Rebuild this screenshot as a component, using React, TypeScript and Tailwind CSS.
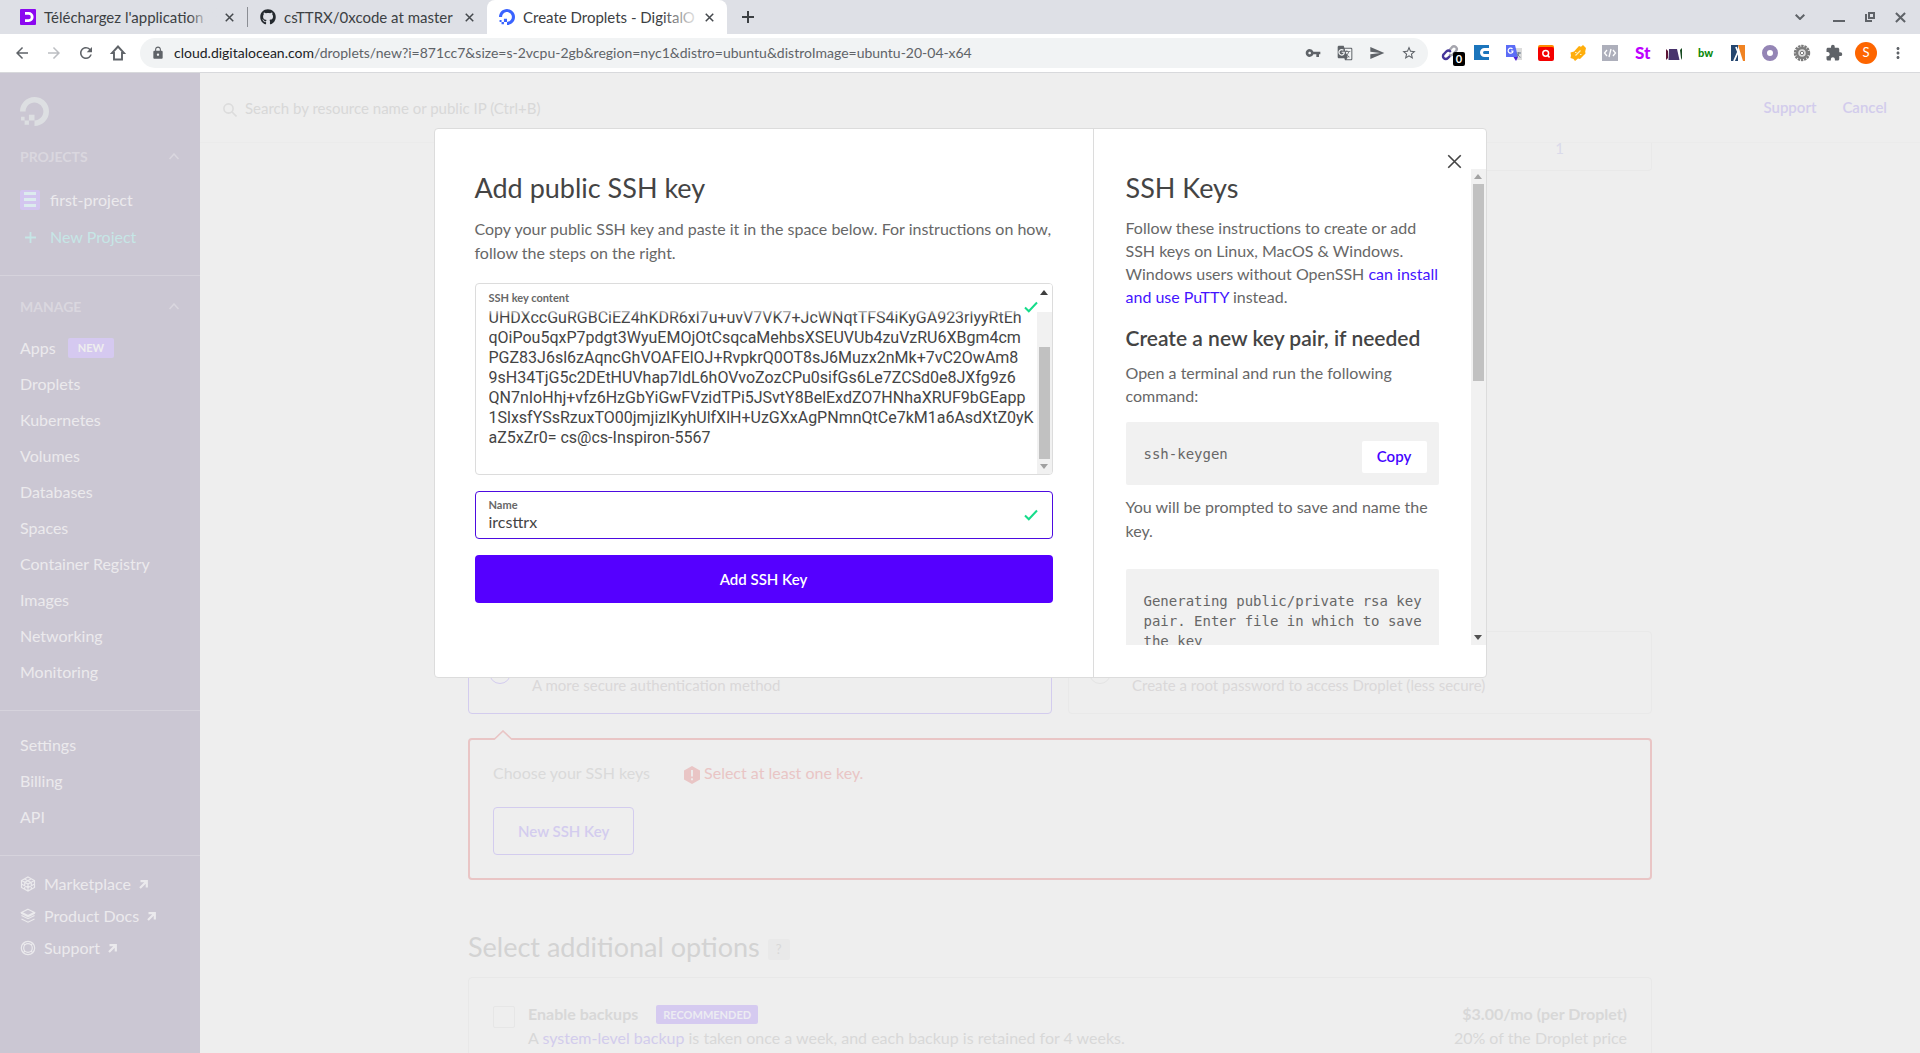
import type { ReactNode } from "react";
import { FaGithub } from "react-icons/fa";
import {
  MdArrowBack,
  MdArrowForward,
  MdExtension,
  MdGTranslate,
  MdLock,
  MdMoreVert,
  MdRefresh,
  MdSend,
  MdStarBorder,
  MdVpnKey,
} from "react-icons/md";

/* ---------- Shared drawings ---------- */

function DropletMark({ className }: { className: string }) {
  return (
    <svg viewBox="0 0 24 24" className={className} fill="currentColor" aria-hidden="true">
      <path d="M12.04 0C5.408-.02.005 5.37.005 11.992h4.638c0-4.923 4.882-8.731 10.064-6.855a6.95 6.95 0 014.147 4.148c1.889 5.177-1.924 10.055-6.84 10.064v-4.61H7.391v4.623h4.61V24c7.86 0 13.967-7.588 11.397-15.83-1.115-3.59-3.985-6.446-7.575-7.575A12.8 12.8 0 0012.039 0zM7.39 19.362H3.828v3.564H7.39zm-3.563 0v-2.978H.85v2.978z" />
    </svg>
  );
}

function CrossIcon({ className, stroke }: { className: string; stroke: number }) {
  return (
    <svg viewBox="0 0 12 12" className={className} fill="none" stroke="currentColor" strokeWidth={stroke} aria-hidden="true">
      <path d="M1 1l10 10M11 1L1 11" />
    </svg>
  );
}

function CheckIcon() {
  return (
    <svg viewBox="0 0 14 12" className="h-3 w-3.5" fill="none" stroke="#15dc8a" strokeWidth="2" aria-hidden="true">
      <path d="M1 6.5l3.8 3.8L13 1.5" />
    </svg>
  );
}

function Triangle({ down, color }: { down?: boolean; color: string }) {
  return (
    <svg viewBox="0 0 8 5" className="h-[5px] w-2" fill={color} aria-hidden="true">
      <path d={down ? "M0 0h8L4 5z" : "M0 5h8L4 0z"} />
    </svg>
  );
}

/* ---------- Browser window ---------- */

type TabProps = { icon: ReactNode; title: string; active?: boolean; faded?: boolean };

function Tab({ icon, title, active, faded }: TabProps) {
  return (
    <div
      className={
        active
          ? "relative flex h-full w-60 items-center rounded-t-lg bg-white pl-3 pr-2.5"
          : "relative flex h-full w-[239px] items-center pl-3 pr-2.5"
      }
    >
      {icon}
      <span className="ml-2 whitespace-nowrap text-[15px] leading-5 text-[#3c4043]">{title}</span>
      {faded && (
        <span
          className={
            active
              ? "absolute right-[26px] h-5 w-10 bg-linear-to-r from-transparent to-white"
              : "absolute right-[26px] h-5 w-8 bg-linear-to-r from-transparent to-[#dee0e6] to-60%"
          }
        />
      )}
      <button aria-label="Close tab" className="ml-auto flex size-4 items-center justify-center text-[#45494d]">
        <CrossIcon className="size-[9px]" stroke={2} />
      </button>
    </div>
  );
}

function TabStrip() {
  return (
    <div className="flex h-[34px] shrink-0 items-center bg-[#dee0e6] pl-2 text-[#3c4043]">
      <Tab
        faded
        title="Téléchargez l'application s"
        icon={
          <svg viewBox="0 0 16 16" className="size-4 shrink-0" aria-hidden="true">
            <rect width="16" height="16" rx="1" fill="#8b08f0" />
            <path d="M5 4.4h3.600a3.600 3.600 0 010 7.200H5" fill="none" stroke="#fff" strokeWidth="2.800" />
            <path d="M4 6.800h2v2.400H4z" fill="#8b08f0" />
          </svg>
        }
      />
      <span className="h-5 w-px bg-[#8b8e94]" />
      <Tab title="csTTRX/0xcode at master" icon={<FaGithub className="size-4 shrink-0 text-[#24292e]" />} />
      <Tab active faded title="Create Droplets - DigitalO" icon={<DropletMark className="size-4 shrink-0 text-[#3a63ff]" />} />
      <button aria-label="New tab" className="ml-[13px] flex size-4 items-center justify-center">
        <svg viewBox="0 0 12 12" className="size-3" stroke="currentColor" strokeWidth="2" aria-hidden="true">
          <path d="M6 0v12M0 6h12" />
        </svg>
      </button>
      <div className="ml-auto flex items-center gap-5 pr-3.5 text-[#5f6368]">
        <button aria-label="Search tabs" className="mr-2">
          <svg viewBox="0 0 10 6" className="h-1.5 w-2.5" fill="none" stroke="currentColor" strokeWidth="2" aria-hidden="true">
            <path d="M.7.7L5 5 9.300.7" />
          </svg>
        </button>
        <button aria-label="Minimize" className="flex h-2.5 w-3 items-end">
          <span className="h-0.5 w-full bg-[#5f6368]" />
        </button>
        <button aria-label="Restore">
          <svg viewBox="0 0 10 10" className="size-2.5" fill="none" stroke="currentColor" strokeWidth="2" aria-hidden="true">
            <path d="M4 1h5v5H4zM1 2v7h6" />
          </svg>
        </button>
        <button aria-label="Close window">
          <CrossIcon className="size-[11px]" stroke={2.2} />
        </button>
      </div>
    </div>
  );
}

const extensions: { name: string; art: ReactNode }[] = [
  {
    name: "Link counter",
    art: (
      <g fill="none" strokeWidth="2.4" strokeLinecap="round">
        <path d="M9 5.500l2-2.300a2.700 2.700 0 014 3.800l-3 3.400a2.600 2.600 0 01-3 .4" stroke="#a5a5ad" />
        <path d="M8.500 12.500l-1.700 1.700a2.800 2.800 0 01-4-4l2.700-2.900a2.700 2.700 0 013.700 0" stroke="#45359a" />
      </g>
    ),
  },
  {
    name: "Clipper",
    art: (
      <>
        <path d="M1 1h15v15H1z" fill="#1b75bc" />
        <path d="M16 5.500h-4.500a3 3 0 000 6H16" fill="none" stroke="#fff" strokeWidth="3" />
      </>
    ),
  },
  {
    name: "Translate",
    art: (
      <>
        <path d="M7 4h10v12H10z" fill="#dcdcdc" />
        <path d="M1 1h9l3 12H1z" fill="#5b6cf6" />
        <path d="M8.500 7H6M8 7.500A2.500 2.500 0 117.500 5" fill="none" stroke="#fff" strokeWidth="1.200" />
        <path d="M11.500 9h4.500M13.800 8v1c0 2-1 3-2 4M12.500 10c.5 1.500 1.500 2.500 3 3.300" fill="none" stroke="#67788a" />
        <path d="M8.500 13H13l-2 4z" fill="#4c1fd3" />
      </>
    ),
  },
  {
    name: "Search tool",
    art: (
      <>
        <rect x="1" y="1" width="16" height="10" rx="2" fill="#ff8a00" />
        <rect x="1" y="3" width="16" height="14" rx="2" fill="#f40000" />
        <g fill="none" stroke="#fff" strokeWidth="1.500">
          <circle cx="8.700" cy="9.300" r="2.900" />
          <path d="M10.500 11l2 2.500" />
        </g>
      </>
    ),
  },
  {
    name: "Coupons",
    art: (
      <>
        <path d="M1.500 8.500l3.500-1 5-5.500 2 .8L14 1l3 3-.8 3.500.3 2-5.500 5.500-2-.6L6 17l-1.500-2-3-1 .5-2.500z" fill="#ffae0c" />
        <path d="M6.500 11.500l5-5M6 8.500h1.500M11 10.500h1.500" stroke="#fff0bd" fill="none" strokeWidth="1.200" />
      </>
    ),
  },
  {
    name: "Code viewer",
    art: (
      <>
        <path d="M1 1h16v16H1z" fill="#adafbb" />
        <path d="M6 6L3.500 9 6 12M12 6l2.500 3-2.500 3M10 5l-2 8" fill="none" stroke="#fff" strokeWidth="1.300" />
      </>
    ),
  },
  {
    name: "Stylus",
    art: (
      <text x="2" y="15" fontSize="17" fontWeight="900" fontFamily="Lato, sans-serif" fill="#bd00ff">
        St
      </text>
    ),
  },
  {
    name: "Archive",
    art: (
      <>
        <path d="M1 5l2 2v7l-2 2z" fill="#5c1535" />
        <path d="M4 5h8l2.500 11H3.500z" fill="#48336c" />
        <path d="M17 4l-2 2 1 8 1 2z" fill="#164a20" />
      </>
    ),
  },
  {
    name: "Builder",
    art: (
      <text x="1" y="13" fontSize="11" fontWeight="900" fontFamily="Lato, sans-serif" fill="#0b8a0b">
        bw
      </text>
    ),
  },
  {
    name: "Analytics",
    art: (
      <>
        <path d="M2 1h7v16H2z" fill="#24466f" />
        <path d="M9 1h7v16h-2z" fill="#f08322" />
        <path d="M5 17l4-9 3 9M7 3l2 5" fill="none" stroke="#fff" strokeWidth="1.800" />
      </>
    ),
  },
  {
    name: "Recorder",
    art: <circle cx="9" cy="9" r="5.500" fill="none" stroke="#9485b5" strokeWidth="5" />,
  },
  {
    name: "Gear",
    art: (
      <>
        <circle cx="9" cy="9" r="7" fill="none" stroke="#7a7a7a" strokeWidth="2.400" strokeDasharray="2.400 .8" />
        <circle cx="9" cy="9" r="5" fill="#dcdcdc" stroke="#7d7d7d" strokeWidth="2.400" />
        <circle cx="9" cy="9" r="1.700" fill="#fff" stroke="#777" />
      </>
    ),
  },
];

function Toolbar() {
  return (
    <div className="flex h-[39px] shrink-0 items-center border-b border-[#d8d9dc] bg-white text-[#5f6368]">
      <div className="flex items-center gap-3.5 pl-[13px]">
        <button aria-label="Back"><MdArrowBack className="size-[18px]" /></button>
        <button aria-label="Forward" className="text-[#bcbec2]"><MdArrowForward className="size-[18px]" /></button>
        <button aria-label="Reload"><MdRefresh className="size-[18px]" /></button>
        <button aria-label="Home">
          <svg viewBox="0 0 18 18" className="size-[18px]" fill="none" stroke="currentColor" strokeWidth="1.900" aria-hidden="true">
            <path d="M9 2.500L3 9h2v6.500h8V9h2z" />
          </svg>
        </button>
      </div>
      <div className="ml-[13px] flex h-[30px] grow items-center rounded-full bg-[#f1f3f4] px-[11px]">
        <MdLock className="size-3.5 shrink-0" />
        <div className="ml-[9px] grow text-[14px] leading-5 text-[#5f6368]">
          <span className="text-[#202124]">cloud.digitalocean.com</span>
          /droplets/new?i=871cc7&amp;size=s-2vcpu-2gb&amp;region=nyc1&amp;distro=ubuntu&amp;distroImage=ubuntu-20-04-x64
        </div>
        <div className="flex items-center gap-4">
          <button aria-label="Passwords"><MdVpnKey className="size-4" /></button>
          <button aria-label="Translate"><MdGTranslate className="size-4" /></button>
          <button aria-label="Send"><MdSend className="size-4" /></button>
          <button aria-label="Bookmark"><MdStarBorder className="size-4" /></button>
        </div>
      </div>
      <div className="flex items-center gap-3.5 px-[13px]">
        {extensions.map((ext, i) => (
          <button key={ext.name} aria-label={ext.name} className="relative">
            <svg viewBox="0 0 18 18" className="size-[18px]" aria-hidden="true">{ext.art}</svg>
            {i === 0 && (
              <span className="absolute -right-1.5 top-2 flex h-3.5 w-3 items-center justify-center rounded-xs bg-black text-[11px] font-bold leading-[14px] text-white">
                0
              </span>
            )}
          </button>
        ))}
        <button aria-label="Extensions"><MdExtension className="size-[18px]" /></button>
        <button aria-label="Profile" className="-mx-0.5 flex size-[22px] items-center justify-center rounded-full bg-[#fd6500] text-[13px] text-white">
          S
        </button>
        <button aria-label="Menu"><MdMoreVert className="size-[18px]" /></button>
      </div>
    </div>
  );
}

/* ---------- Page behind the dialog ---------- */

function SectionTitle({ children }: { children: string }) {
  return (
    <h2 className="mt-5 flex h-5 items-center justify-between pr-[21px] text-[14px] font-bold text-[#dad7df]">
      {children}
      <svg viewBox="0 0 10 7" className="h-[7px] w-2.5" fill="none" stroke="currentColor" strokeWidth="1.500" aria-hidden="true">
        <path d="M.5 6L5 1l4.500 5" />
      </svg>
    </h2>
  );
}

const manageLinks = ["Droplets", "Kubernetes", "Volumes", "Databases", "Spaces", "Container Registry", "Images", "Networking", "Monitoring"];
const accountLinks = ["Settings", "Billing", "API"];

const outerLinks: { label: string; art: ReactNode }[] = [
  {
    label: "Marketplace",
    art: (
      <path d="M8 1l6.500 3.500v7L8 15l-6.500-3.500v-7zM1.500 4.500L8 8l6.500-3.500M8 8v7M4.500 3l6.500 3.500M4.500 6.500L11 3M1.500 8L8 11.500 14.500 8M4.700 6.300v6.500M11.300 6.300v6.500" />
    ),
  },
  {
    label: "Product Docs",
    art: <path d="M8 1.200l6.500 3.200L8 7.600 1.500 4.400zM1.500 7.500L8 10.700l6.500-3.200M1.500 11L8 14.200 14.500 11M1.500 4.400v1l6.500 3.500 6.500-3.500v-1" />,
  },
  {
    label: "Support",
    art: (
      <>
        <circle cx="8" cy="8" r="6.700" />
        <circle cx="8" cy="8" r="4.300" />
        <path d="M3.300 3.300l1.700 1.700M12.700 3.300L11 5M3.300 12.700L5 11M12.700 12.700L11 11" />
      </>
    ),
  },
];

function Sidebar() {
  return (
    <nav className="w-[200px] shrink-0 bg-[#cbc7d3] text-[16px] text-[#ebeaed]">
      <div className="pl-5 pt-6">
        <DropletMark className="size-[29px] text-[#dddfe2]" />
        <SectionTitle>PROJECTS</SectionTitle>
        <a href="#project" className="mt-[15px] flex h-[37px] items-center gap-2.5">
          <span className="flex size-5 flex-col items-center justify-center gap-[3px] rounded-xs bg-[#d3c6ef]">
            <span className="h-[3px] w-3 bg-[#dcebee]" />
            <span className="h-[3px] w-3 bg-[#dcebee]" />
            <span className="h-[3px] w-3 bg-[#dcebee]" />
          </span>
          first-project
        </a>
        <a href="#new-project" className="flex h-[37px] items-center gap-2.5 text-[#c6e6e6]">
          <svg viewBox="0 0 20 20" className="size-5" stroke="currentColor" strokeWidth="1.800" aria-hidden="true">
            <path d="M10.500 5v11M5 10.500h11" />
          </svg>
          New Project
        </a>
      </div>
      <hr className="mt-5 border-[#d6d3dc]" />
      <div className="pl-5">
        <SectionTitle>MANAGE</SectionTitle>
        <a href="#apps" className="mt-3.5 flex h-9 items-center gap-3">
          Apps
          <span className="flex h-5 items-center rounded-xs bg-[#d5c9f0] px-2.5 text-[11px] font-bold text-[#eeeeee]">NEW</span>
        </a>
        {manageLinks.map((label) => (
          <a key={label} href="#manage" className="flex h-9 items-center">{label}</a>
        ))}
      </div>
      <hr className="mt-5 border-[#d6d3dc]" />
      <div className="pl-5 pt-4">
        {accountLinks.map((label) => (
          <a key={label} href="#account" className="flex h-9 items-center">{label}</a>
        ))}
      </div>
      <hr className="mt-5 border-[#d6d3dc]" />
      <div className="pl-5 pt-3">
        {outerLinks.map(({ label, art }) => (
          <a key={label} href="#external" className="flex h-8 items-center gap-2">
            <svg viewBox="0 0 16 16" className="size-4" fill="none" stroke="currentColor" strokeWidth="1.200" aria-hidden="true">{art}</svg>
            {label}
            <svg viewBox="0 0 9 9" className="size-[9px]" fill="none" stroke="currentColor" strokeWidth="2.200" aria-hidden="true">
              <path d="M1 8l6.500-6.500M1.500 1.200h6.300v6.300" />
            </svg>
          </a>
        ))}
      </div>
    </nav>
  );
}

function Search() {
  return (
    <header className="flex h-[70px] items-center border-b border-[#ebebeb] pl-[23px] pr-[33px]">
      <svg viewBox="0 0 14 14" className="mt-1 size-3.5 shrink-0" fill="none" stroke="#dcdcdc" strokeWidth="1.600" aria-hidden="true">
        <circle cx="5.500" cy="5.500" r="4.600" />
        <path d="M9 9l4.500 4.500" />
      </svg>
      <input
        aria-label="Search by resource name or public IP (Ctrl+B)"
        placeholder="Search by resource name or public IP (Ctrl+B)"
        className="ml-2 grow bg-transparent text-[15px] leading-6 outline-none placeholder:text-[#d8d8d8]"
      />
      <a href="#support" className="text-[15px] font-semibold text-[#d2ccec]">Support</a>
      <a href="#cancel" className="ml-[26px] text-[15px] font-semibold text-[#d2ccec]">Cancel</a>
    </header>
  );
}

function AuthOption({ title, text, checked }: { title: string; text: string; checked?: boolean }) {
  return (
    <label
      className={
        checked
          ? "flex h-[83px] items-center rounded-sm border border-[#d3ccee] pl-5"
          : "flex h-[83px] items-center rounded-sm border border-[#e9e9e9] pl-5"
      }
    >
      <input
        type="radio"
        name="auth"
        defaultChecked={checked}
        className={
          checked
            ? "size-[22px] appearance-none rounded-full border border-[#d3ccee]"
            : "size-[22px] appearance-none rounded-full border border-[#e4e4e4]"
        }
      />
      <span className="ml-[21px] flex flex-col leading-6">
        <span className="text-[16px] font-semibold text-[#dadada]">{title}</span>
        <span className="text-[15px] text-[#dad8d9]">{text}</span>
      </span>
    </label>
  );
}

function Content() {
  return (
    <main className="mx-auto w-full max-w-[1184px]">
      <div className="flex h-7 justify-end rounded-b-sm border-x border-b border-[#e9e9e9] pr-[87px] text-[15px] leading-[10px] text-[#dadaea]">1</div>

      <div className="mt-[460px] grid grid-cols-2 gap-4">
        <AuthOption checked title="SSH keys" text="A more secure authentication method" />
        <AuthOption title="Password" text="Create a root password to access Droplet (less secure)" />
      </div>

      <section className="relative mt-6 rounded-sm border-2 border-[#e9c5c5] px-[23px] pb-[23px] pt-[21px]">
        <svg viewBox="0 0 18 10" className="absolute -top-2.5 left-6 h-2.5 w-[18px]" aria-hidden="true">
          <path d="M0 10L9 1l9 9z" fill="#eeeeee" />
          <path d="M0 9.500L9 1l9 8.500" fill="none" stroke="#e9c5c5" strokeWidth="1.600" />
        </svg>
        <div className="flex h-6 items-center text-[16px] text-[#dadada]">
          Choose your SSH keys
          <svg viewBox="0 0 16 18" className="ml-[34px] mt-1 h-[18px] w-4" aria-hidden="true">
            <path d="M8 0l8 4.500v9L8 18l-8-4.500v-9z" fill="#e9c5c5" />
            <path d="M8 4v6.500M8 12.300v1.900" stroke="#eee" strokeWidth="1.800" />
          </svg>
          <span className="ml-1 text-[#e9c5c5]">Select at least one key.</span>
        </div>
        <button className="mt-[22px] h-12 rounded-sm border border-[#d3ccee] px-6 text-[15px] font-semibold text-[#d3ccee]">New SSH Key</button>
      </section>

      <div className="mt-[47px] flex h-10 items-center">
        <h2 className="text-[27px] leading-9 text-[#d3d3d3]">Select additional options</h2>
        <button aria-label="Help" className="ml-2 mt-1 h-[21px] w-[22px] rounded-xs bg-[#e9e9e9] text-[13px] leading-5 text-[#d8d8d8]">?</button>
      </div>

      <section className="mt-2.5 flex rounded-t-sm border border-[#e8e8e8] px-6 pt-6 text-[16px] leading-6 text-[#d8d8d8]">
        <input id="backups" type="checkbox" className="mt-1 size-[22px] appearance-none rounded-xs border border-[#e6e6e6]" />
        <div className="ml-[13px] grow">
          <div className="flex items-center">
            <label htmlFor="backups" className="font-bold">Enable backups</label>
            <span className="ml-[18px] rounded-xs bg-[#d5caf0] px-[7px] text-[11px] font-bold leading-[19px] text-[#ececf2]">RECOMMENDED</span>
          </div>
          <p>
            A <a href="#backup" className="text-[#d2ccec]">system-level backup</a> is taken once a week, and each backup is retained for 4 weeks.
          </p>
        </div>
        <div className="pb-6 text-right">
          <p className="font-bold">$3.00/mo (per Droplet)</p>
          <p>20% of the Droplet price</p>
        </div>
      </section>
    </main>
  );
}

/* ---------- Dialog ---------- */

const sshKey = `UHDXccGuRGBCiEZ4hKDR6xl7u+uvV7VK7+JcWNqtTFS4iKyGA923rlyyRtEh
qOiPou5qxP7pdgt3WyuEMOjOtCsqcaMehbsXSEUVUb4zuVzRU6XBgm4cm
PGZ83J6sl6zAqncGhVOAFElOJ+RvpkrQ0OT8sJ6Muzx2nMk+7vC2OwAm8
9sH34TjG5c2DEtHUVhap7ldL6hOVvoZozCPu0sifGs6Le7ZCSd0e8JXfg9z6
QN7nIoHhj+vfz6HzGbYiGwFVzidTPi5JSvtY8BelExdZO7HNhaXRUF9bGEapp
1SlxsfYSsRzuxTO00jmjizlKyhUlfXlH+UzGXxAgPNmnQtCe7kM1a6AsdXtZ0yK
aZ5xZr0= cs@cs-Inspiron-5567`;

function KeyForm() {
  return (
    <form className="w-[658px] px-10 pb-[74px] pt-10 text-[#444444]" onSubmit={(e) => e.preventDefault()}>
      <h1 className="text-[27px] leading-[37px]">Add public SSH key</h1>
      <p className="mt-[11px] text-[16px] leading-6 text-[#676767]">
        Copy your public SSH key and paste it in the space below. For instructions on how, follow the steps on the right.
      </p>

      <div className="relative mt-[18px] flex h-48 overflow-hidden rounded-sm border border-[#dcdcdc]">
        <div className="flex min-w-0 grow flex-col pl-[13px]">
          <label htmlFor="key" className="mt-2 shrink-0 text-[11px] font-bold leading-3 text-[#676767]">
            SSH key content
          </label>
          <textarea
            id="key"
            defaultValue={sshKey}
            spellCheck={false}
            className="mt-1 w-full grow resize-none overflow-hidden whitespace-pre bg-transparent font-['Roboto',sans-serif] text-[16px] leading-5 outline-none"
          />
        </div>
        <div className="flex w-[15px] shrink-0 flex-col items-center bg-[#f1f1f1]">
          <div className="flex h-7 w-full items-start justify-center bg-white pt-1.5">
            <Triangle color="#3f3f3f" />
          </div>
          <div className="mt-[35px] h-28 w-[11px] bg-[#c1c1c1]" />
          <div className="mt-[5px]"><Triangle down color="#a0a0a0" /></div>
        </div>
        <div className="absolute left-px right-4 top-6 h-2 bg-linear-to-b from-white to-transparent" />
        <div className="absolute right-[14px] top-[17px]"><CheckIcon /></div>
      </div>

      <div className="mt-4 flex h-12 items-center rounded-sm border border-[#4d0be0] pl-[13px] pr-3.5">
        <div className="flex grow flex-col">
          <label htmlFor="name" className="text-[11px] font-bold leading-3 text-[#676767]">Name</label>
          <input id="name" defaultValue="ircsttrx" className="mt-px h-5 w-full text-[16px] leading-5 outline-none" />
        </div>
        <CheckIcon />
      </div>

      <button className="mt-4 h-12 w-full rounded-sm bg-[#5500ff] text-[15px] font-semibold text-white">Add SSH Key</button>
    </form>
  );
}

function Guide() {
  return (
    <aside className="relative w-[393px] border-l border-[#dcdcdc] pt-10 text-[16px] text-[#676767]">
      <button aria-label="Close" className="absolute right-6 top-[25px] text-[#444444]">
        <CrossIcon className="size-[15px]" stroke={1.3} />
      </button>
      <div className="flex h-[476px] overflow-hidden">
        <div className="grow px-8">
          <h2 className="text-[27px] leading-[37px] text-[#444444]">SSH Keys</h2>
          <p className="mt-2.5 leading-[23px]">
            Follow these instructions to create or add SSH keys on Linux, MacOS &amp; Windows. Windows users without OpenSSH{" "}
            <a href="#putty" className="text-[#4414ff]">can install and use PuTTY</a> instead.
          </p>
          <h3 className="mt-4 text-[21px] font-semibold leading-7 text-[#444444]">Create a new key pair, if needed</h3>
          <p className="mt-[9px] leading-[23px]">Open a terminal and run the following command:</p>
          <div className="mt-[15px] flex h-[63px] items-center justify-between rounded-xs bg-[#f1f1f1] pl-[18px] pr-3">
            <code className="font-['DejaVu_Sans_Mono',monospace] text-[14px] leading-5">ssh-keygen</code>
            <button className="mt-1.5 h-8 w-[65px] rounded-xs bg-white text-[15px] font-semibold text-[#4404ff]">Copy</button>
          </div>
          <p className="mt-2.5 leading-6">You will be prompted to save and name the key.</p>
          <pre className="mt-[26px] rounded-xs bg-[#f1f1f1] pb-6 pl-[18px] pt-[22px] font-['DejaVu_Sans_Mono',monospace] text-[14px] leading-5">
            {"Generating public/private rsa key\npair. Enter file in which to save\nthe key"}
          </pre>
        </div>
        <div className="flex w-[15px] shrink-0 flex-col items-center bg-[#f1f1f1]">
          <div className="flex h-[15px] items-center"><Triangle color="#a3a3a3" /></div>
          <div className="h-[197px] w-[11px] bg-[#c1c1c1]" />
          <div className="mt-auto flex h-[15px] items-center"><Triangle down color="#505050" /></div>
        </div>
      </div>
    </aside>
  );
}

export default function App() {
  return (
    <div className="relative flex h-screen flex-col overflow-hidden bg-[#eeeeee] font-['Lato','Open_Sans',sans-serif]">
      <TabStrip />
      <Toolbar />
      <div className="flex min-h-0 grow overflow-hidden">
        <Sidebar />
        <div className="min-w-0 grow">
          <Search />
          <Content />
        </div>
      </div>
      <div className="absolute inset-x-0 top-32 flex justify-center">
        <div role="dialog" aria-label="Add public SSH key" className="flex rounded-sm border border-[#dcdcdc] bg-white">
          <KeyForm />
          <Guide />
        </div>
      </div>
    </div>
  );
}
